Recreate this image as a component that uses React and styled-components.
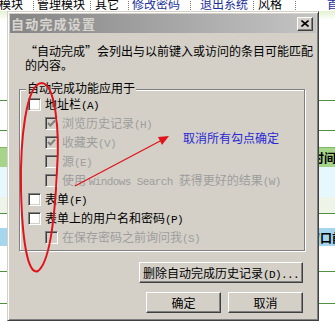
import styled, { createGlobalStyle } from "styled-components";

const GlobalStyle = createGlobalStyle`
  * { box-sizing: border-box; }
  html, body { margin: 0; padding: 0; background: #fff; }
  body {
    font-family: "Noto Sans CJK SC", sans-serif;
    font-size: 12px;
    color: #000;
  }
`;

const Page = styled.div`
  position: relative;
  width: 335px;
  height: 328px;
  overflow: hidden;
  background: #fff;
`;

/* ---- page behind the dialog ---- */

const NavBar = styled.div`
  height: 11px;
  display: flex;
  align-items: flex-end;
  overflow: hidden;
  white-space: nowrap;
  font-size: 12px;
`;

const NavItem = styled.span`
  flex: none;
  margin-left: ${(p) => p.$ml}px;
  line-height: 14px;
  color: ${(p) => (p.$link ? "#1b2f9c" : "#000")};
`;

const NavSep = styled.span`
  flex: none;
  margin-left: ${(p) => p.$ml}px;
  width: 1px;
  height: 9px;
  margin-bottom: 1px;
  border-left: 1px dotted #777;
`;

const GreenBand = styled.div`
  height: 9px;
  background: linear-gradient(#e2f1d2, #f6fbf1 70%, #fff);
`;

const Row = styled.div`
  height: ${(p) => p.$h}px;
  background: ${(p) => p.$bg || "#fff"};
  border-top: ${(p) => (p.$top ? `1px solid ${p.$top}` : "none")};
  border-bottom: ${(p) => (p.$line ? "1px solid #4f9140" : "none")};
  display: flex;
  align-items: center;
  padding-left: ${(p) => p.$pl || 0}px;
  white-space: nowrap;
  overflow: hidden;
  font-size: 12px;
  font-weight: bold;
`;

/* ---- dialog ---- */

const Dialog = styled.div`
  position: absolute;
  left: 7px;
  top: 11px;
  width: 312px;
  height: 310px;
  padding: 2px;
  display: flex;
  flex-direction: column;
  background: #d4d0c8;
  border: 1px solid;
  border-color: #d4d0c8 #404040 #404040 #d4d0c8;
  box-shadow: inset 1px 1px 0 #fff, inset -1px -1px 0 #808080;
`;

const TitleBar = styled.div`
  height: 19px;
  flex: none;
  display: flex;
  align-items: center;
  justify-content: space-between;
  padding: 0 3px 0 1px;
  background: linear-gradient(to right, #858585, #c4c4c4);
  color: #d8d5cf;
  font-size: 13px;
  font-weight: bold;
  letter-spacing: 1.2px;
`;

const CloseBtn = styled.div`
  width: 16px;
  height: 14px;
  display: flex;
  align-items: center;
  justify-content: center;
  background: #d4d0c8;
  border: 1px solid;
  border-color: #fff #404040 #404040 #fff;
  box-shadow: inset -1px -1px 0 #808080;
`;

const Body = styled.div`
  flex: 1;
  padding: 11px 11px 0 9px;
  display: flex;
  flex-direction: column;
`;

const Desc = styled.div`
  margin-left: 6px;
  line-height: 14px;
  white-space: nowrap;
`;

const GroupBox = styled.div`
  margin-top: 17px;
  height: 162px;
  padding: 0 8px 0 8px;
  border: 1px solid #808080;
  box-shadow: 1px 1px 0 #fff, inset 1px 1px 0 #fff;
`;

const Legend = styled.div`
  width: fit-content;
  margin: -9px 0 0 -2px;
  padding: 0 1px;
  line-height: 14px;
  background: #d4d0c8;
`;

const CheckRow = styled.div`
  height: 19px;
  display: flex;
  align-items: center;
  padding-left: ${(p) => (p.$sub ? 17 : 0)}px;
  color: ${(p) => (p.$off ? "#9d9d9d" : "#000")};
  white-space: nowrap;
`;

const Box = styled.span`
  flex: none;
  width: 13px;
  height: 13px;
  display: flex;
  align-items: center;
  justify-content: center;
  border: 1px solid;
  border-color: #808080 #fff #fff #808080;
  box-shadow: inset 1px 1px 0 #404040, inset -1px -1px 0 #d4d0c8;
  background: ${(p) => (p.$off ? "#d4d0c8" : "#fff")};
`;

const Label = styled.span`
  margin-left: 4px;
  line-height: 14px;
`;

const Mono = styled.span`
  font-family: "Liberation Mono", monospace;
  font-size: 11px;
  letter-spacing: -0.6px;
`;

const ButtonRow = styled.div`
  display: flex;
  justify-content: flex-end;
  gap: 7px;
  padding-right: 2px;
  margin-top: ${(p) => p.$mt}px;
`;

const Btn = styled.button`
  width: ${(p) => p.$w}px;
  height: 21px;
  padding: 0;
  background: #d4d0c8;
  border: 1px solid;
  border-color: #fff #404040 #404040 #fff;
  box-shadow: inset -1px -1px 0 #808080;
  font-family: "Noto Sans CJK SC", sans-serif;
  font-size: 12px;
  color: #000;
`;

/* ---- red annotations drawn over the screenshot ---- */

const Marks = styled.svg`
  position: absolute;
  left: 0;
  top: 0;
  pointer-events: none;
`;

const Note = styled.div`
  position: absolute;
  left: 183px;
  top: 131px;
  color: #2828d4;
  font-size: 12px;
  line-height: 14px;
  white-space: nowrap;
`;

const nav = [
  { t: "模块", ml: -1 },
  { sep: true, ml: 10 },
  { t: "管理模块", ml: 3 },
  { sep: true, ml: 5 },
  { t: "其它", ml: 4 },
  { sep: true, ml: 9 },
  { t: "修改密码", ml: 3, link: true },
  { sep: true, ml: 10 },
  { t: "退出系统", ml: 9, link: true },
  { sep: true, ml: 5 },
  { t: "风格", ml: 4 },
  { sep: true, ml: 13 },
  { t: "首", ml: 31, link: true },
];

const options = [
  { label: "地址栏", key: "(A)" },
  { label: "浏览历史记录", key: "(H)", sub: true, off: true, checked: true },
  { label: "收藏夹", key: "(V)", sub: true, off: true, checked: true },
  { label: "源", key: "(E)", sub: true, off: true },
  { label: "使用 ", mono: "Windows Search ", rest: "获得更好的结果", key: "(W)", sub: true, off: true },
  { label: "表单", key: "(F)" },
  { label: "表单上的用户名和密码", key: "(P)" },
  { label: "在保存密码之前询问我", key: "(S)", sub: true, off: true },
];

const Check = ({ off, checked }) => (
  <Box $off={off}>
    {checked && (
      <svg width="9" height="9" viewBox="0 0 9 9">
        <path d="M1 4 L3.5 6.5 L8 1.5" fill="none" stroke={off ? "#808080" : "#000"} strokeWidth="2" />
      </svg>
    )}
  </Box>
);

const App = () => {
  return (
    <Page>
      <GlobalStyle />
      <NavBar>
        {nav.map((n, i) =>
          n.sep ? <NavSep key={i} $ml={n.ml} /> : <NavItem key={i} $ml={n.ml} $link={n.link}>{n.t}</NavItem>
        )}
      </NavBar>
      <GreenBand />
      <Row $h={81} $line />
      <Row $h={30} $line />
      <Row $h={16} />
      <Row $h={20} $bg="#a6d48a" $top="#7fb866" $pl={312}>时间</Row>
      <Row $h={30} $bg="#e6f7fd" />
      <Row $h={17} $bg="#eef5e8" $line />
      <Row $h={14} />
      <Row $h={18} $bg="#a6d6ee" $pl={308}>窗口前</Row>
      <Row $h={26} $line />
      <Row $h={32} $line />

      <Dialog>
        <TitleBar>
          <span>自动完成设置</span>
          <CloseBtn>
            <svg width="8" height="7" viewBox="0 0 8 7">
              <path d="M0.5 0.5 L7.5 6.5 M7.5 0.5 L0.5 6.5" stroke="#000" strokeWidth="1.6" />
            </svg>
          </CloseBtn>
        </TitleBar>
        <Body>
          <Desc>
            “自动完成”会列出与以前键入或访问的条目可能匹配
            <br />
            的内容。
          </Desc>
          <GroupBox>
            <Legend>自动完成功能应用于</Legend>
            {options.map((o) => (
              <CheckRow key={o.key} $sub={o.sub} $off={o.off}>
                <Check off={o.off} checked={o.checked} />
                <Label>
                  {o.label}
                  {o.mono && <Mono>{o.mono}</Mono>}
                  {o.rest}
                  <Mono>{o.key}</Mono>
                </Label>
              </CheckRow>
            ))}
          </GroupBox>
          <ButtonRow $mt={11}>
            <Btn $w={164}>
              删除自动完成历史记录<Mono>(D)...</Mono>
            </Btn>
          </ButtonRow>
          <ButtonRow $mt={9}>
            <Btn $w={75}>确定</Btn>
            <Btn $w={75}>取消</Btn>
          </ButtonRow>
        </Body>
      </Dialog>

      <Marks width="335" height="328" viewBox="0 0 335 328">
        <path
          d="M42 83 C55 84 60 130 57 170 C55 215 50 262 38 271 C27 276 22 235 21 190 C20 140 26 83 42 83 Z"
          fill="none"
          stroke="#e0141a"
          strokeWidth="2"
        />
        <path d="M75 186 L162 140" stroke="#e0141a" strokeWidth="1.3" />
        <path d="M169 136 L158 137 L162 145 Z" fill="#e0141a" />
      </Marks>
      <Note>取消所有勾点确定</Note>
    </Page>
  );
};

export default App;
